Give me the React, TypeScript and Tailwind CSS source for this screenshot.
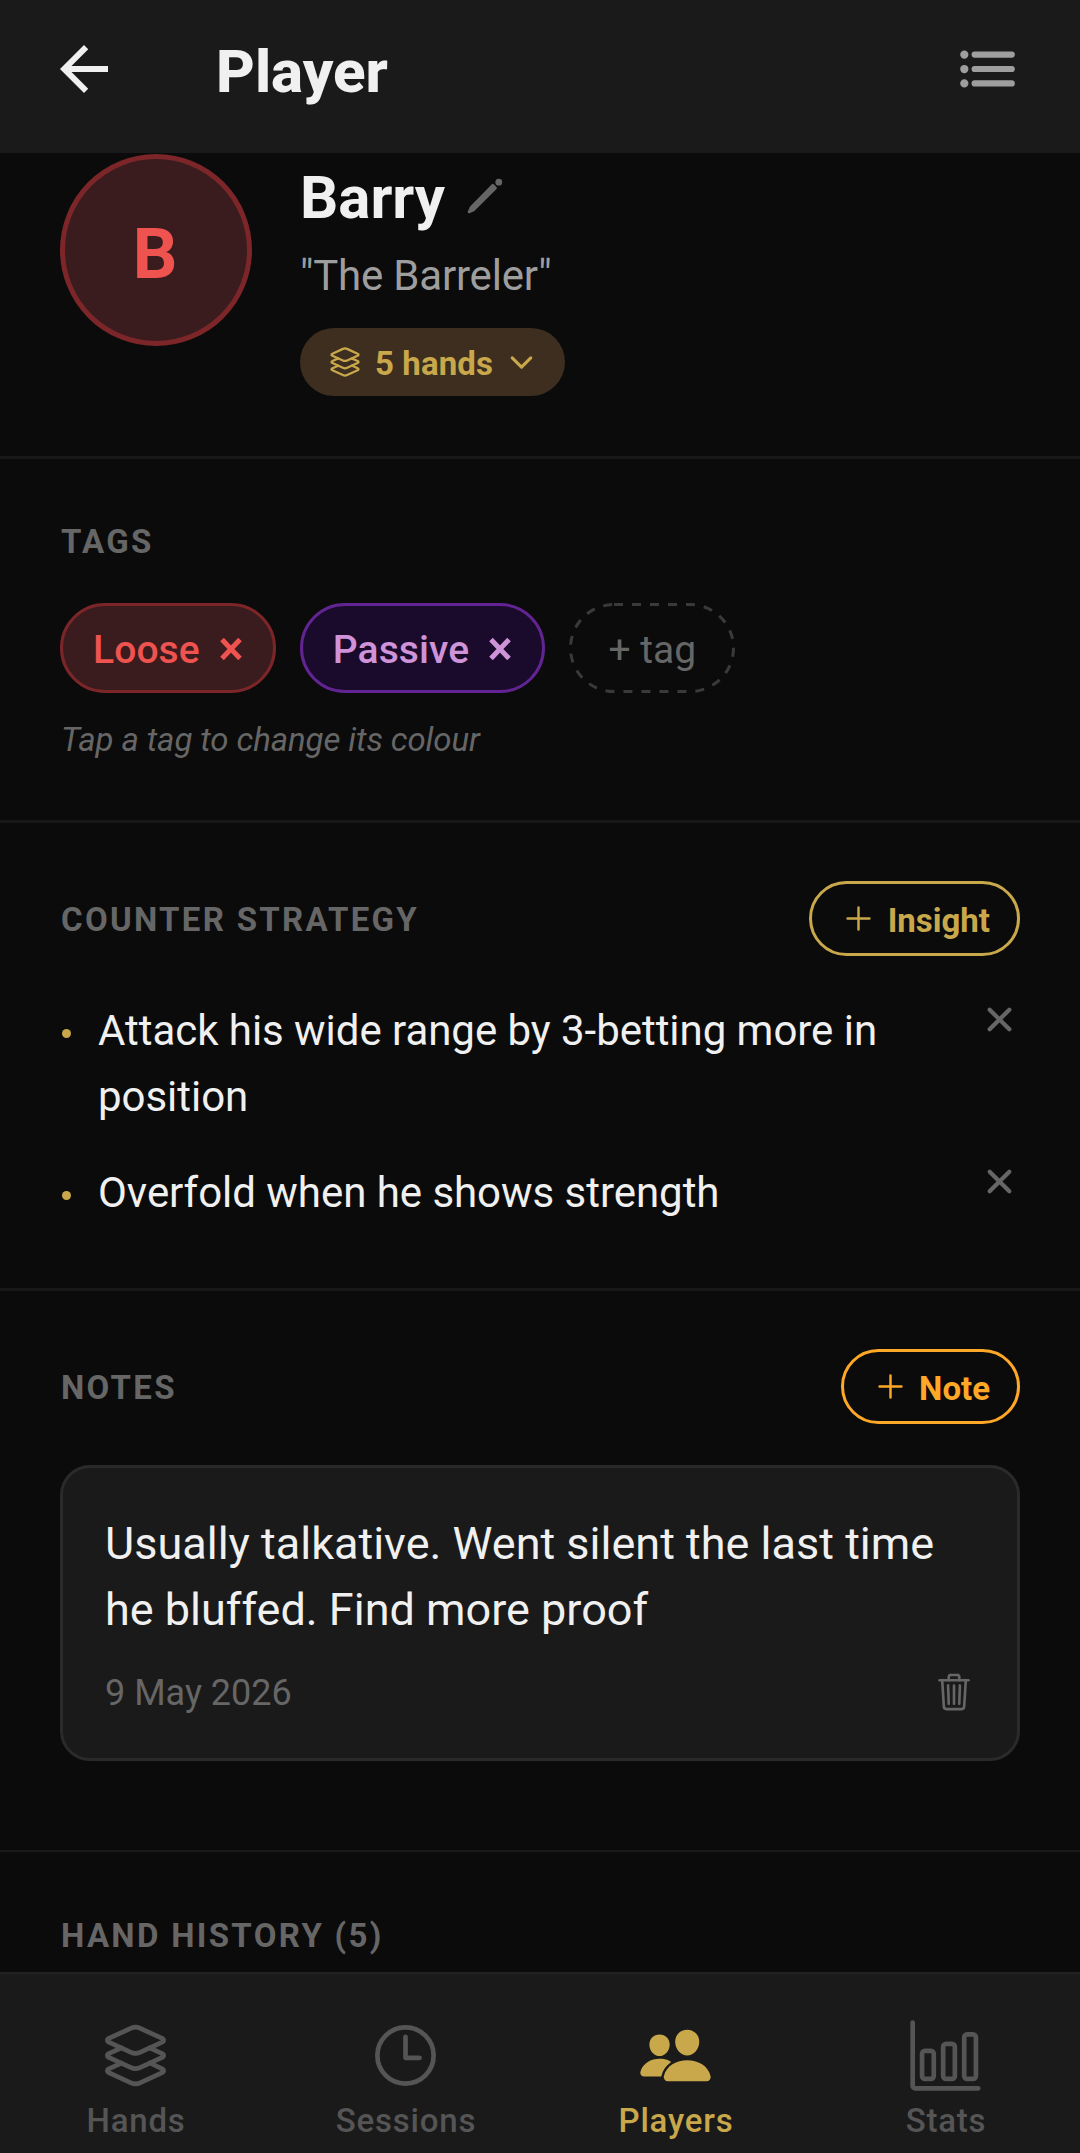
import { useState } from 'react';
import { MdArrowBack } from 'react-icons/md';
import {
  IoAddOutline,
  IoBarChartOutline,
  IoChevronDown,
  IoClose,
  IoLayersOutline,
  IoList,
  IoPeople,
  IoTimeOutline,
  IoTrashOutline,
} from 'react-icons/io5';

interface Tag { id: string; label: string; style: string; }
interface Insight { id: string; text: string; }
interface Note { id: string; text: string; date: string; }

const initialTags: Tag[] = [
  { id: 'loose', label: 'Loose', style: 'border-[#7c2629] bg-[#3a1c1e] text-[#ef5350]' },
  { id: 'passive', label: 'Passive', style: 'border-[#632493] bg-[#1a0b2c] text-[#ce93d8]' },
];

const initialInsights: Insight[] = [
  { id: '1', text: 'Attack his wide range by 3-betting more in position' },
  { id: '2', text: 'Overfold when he shows strength' },
];

const initialNotes: Note[] = [
  { id: '1', text: 'Usually talkative. Went silent the last time he bluffed. Find more proof', date: '9 May 2026' },
];

const tabs = [
  { label: 'Hands', icon: IoLayersOutline },
  { label: 'Sessions', icon: IoTimeOutline },
  { label: 'Players', icon: IoPeople },
  { label: 'Stats', icon: IoBarChartOutline },
];

function SectionLabel({ children }: { children: React.ReactNode }) {
  return <h2 className="pt-px pl-px text-[33px] leading-[40px] font-bold tracking-[2.3px] text-[#666666]">{children}</h2>;
}

function TagCross() {
  return (
    <svg viewBox="0 0 22 22" className="mt-px size-[22px]" fill="none" stroke="currentColor" strokeWidth="5">
      <path d="M2 1.5l18 19M20 1.5L2 20.5" />
    </svg>
  );
}

function PencilIcon() {
  return (
    <svg viewBox="0 0 42 42" className="mb-1 size-[42px] text-[#666666]" fill="currentColor" stroke="currentColor" strokeLinejoin="round">
      <path d="M28.8 10.2l2.8 2.8L9.5 35 5 37l2-4.5z" strokeWidth="2.6" />
      <circle cx="34.8" cy="7.2" r="3.4" stroke="none" />
    </svg>
  );
}

export default function App() {
  const [tags, setTags] = useState(initialTags);
  const [insights, setInsights] = useState(initialInsights);
  const [notes, setNotes] = useState(initialNotes);
  const [activeTab, setActiveTab] = useState('Players');

  return (
    <main className="flex h-[2153px] w-[1080px] flex-col overflow-hidden bg-[#0b0b0b] font-['Roboto',sans-serif] text-[#f0f0f0]">
      <header className="flex h-[153px] shrink-0 items-center bg-[#1a1a1a] pr-[60px] pb-[15px] pl-12">
        <button><MdArrowBack className="size-[72px]" /></button>
        <h1 className="mt-[5px] ml-24 flex-1 text-[60px] leading-[70px] font-extrabold">Player</h1>
        <button className="text-[#9e9e9e]"><IoList className="size-[66px]" /></button>
      </header>

      <div className="min-h-0 flex-1 overflow-hidden">
        <section className="flex h-[306px] gap-12 border-b-[3px] border-[#181818] px-[60px] pt-px">
          <div className="flex size-[192px] items-center justify-center rounded-full border-[5px] border-[#7c2629] bg-[#3a1c1e] text-[70px] leading-[84px] font-bold text-[#ef5350]">
            <span className="mt-[7px] mr-[2px]">B</span>
          </div>
          <div className="flex flex-col items-start pt-[9px]">
            <div className="flex items-center gap-[19px]">
              <span className="text-[60px] leading-[70px] font-bold">Barry</span>
              <PencilIcon />
            </div>
            <p className="mt-[18px] text-[42px] leading-[50px] tracking-[-0.2px] text-[#9e9e9e]">"The Barreler"</p>
            <button className="mt-[27px] flex h-[68px] items-center rounded-full bg-[#3d2e1f] px-[27px] text-[33px] font-bold text-[#c9a84c]">
              <IoLayersOutline className="size-9" />
              <span className="mt-[4px] ml-3 tracking-[0.1px]">5 hands</span>
              <IoChevronDown className="ml-3 size-[33px]" />
            </button>
          </div>
        </section>

        <section className="border-b-[3px] border-[#181818] px-[60px] pt-[62px] pb-[60px]">
          <SectionLabel>TAGS</SectionLabel>
          <div className="mt-[41px] flex gap-6">
            {tags.map((tag) => (
              <button
                key={tag.id}
                onClick={() => setTags(tags.filter((t) => t.id !== tag.id))}
                className={`flex h-[90px] items-center gap-5 rounded-full border-[3px] pr-[31px] pl-[30px] text-[39px] font-medium tracking-[0.1px] ${tag.style}`}
              >
                <span className="mt-[5px]">{tag.label}</span>
                <TagCross />
              </button>
            ))}
            <button className="relative flex h-[90px] w-[166px] items-center justify-center text-[39px] text-[#666666]">
              <svg viewBox="0 0 166 90" className="absolute inset-0 size-full" fill="none">
                <rect x="1.5" y="1.5" width="163" height="87" rx="43.5" stroke="#3a3a3a" strokeWidth="3" strokeDasharray="9 9" />
              </svg>
              <span className="mt-[5px]">+ tag</span>
            </button>
          </div>
          <p className="mt-[27px] pl-px text-[33px] leading-[40px] tracking-[-0.1px] text-[#666666] italic">Tap a tag to change its colour</p>
        </section>

        <section className="border-b-[3px] border-[#181818] px-[60px] pt-[58px] pb-[62px]">
          <div className="flex items-center justify-between">
            <div className="pt-[2px]"><SectionLabel>COUNTER STRATEGY</SectionLabel></div>
            <button className="flex h-[75px] items-center rounded-full border-[3px] border-[#c9a84c] px-[27px] text-[33px] font-bold text-[#c9a84c]">
              <IoAddOutline className="size-[39px]" />
              <span className="mt-[4px] ml-[10px]">Insight</span>
            </button>
          </div>
          <ul className="mt-[42px] space-y-[30px]">
            {insights.map((insight) => (
              <li key={insight.id} className="flex items-start">
                <span className="mt-[31px] ml-[2px] size-[9px] rounded-full bg-[#c9a84c]" />
                <p className="ml-[27px] w-[860px] text-[42px] leading-[66px] tracking-[-0.04px]">{insight.text}</p>
                <button
                  onClick={() => setInsights(insights.filter((i) => i.id !== insight.id))}
                  className="-mt-px -mr-[2px] ml-auto text-[#666666]"
                >
                  <IoClose className="size-[45px]" />
                </button>
              </li>
            ))}
          </ul>
        </section>

        <section className="border-b-2 border-[#1a1a1a] px-[60px] pt-[58px] pb-[89px]">
          <div className="flex items-center justify-between">
            <div className="pt-[2px]"><SectionLabel>NOTES</SectionLabel></div>
            <button className="flex h-[75px] items-center rounded-full border-[3px] border-[#ffa726] px-[27px] text-[33px] font-bold text-[#ffa726]">
              <IoAddOutline className="size-[39px]" />
              <span className="mt-[4px] ml-[9px]">Note</span>
            </button>
          </div>
          {notes.map((note) => (
            <div key={note.id} className="mt-[41px] rounded-[30px] border-[3px] border-[#2a2a2a] bg-[#1a1a1a] px-[42px] pt-[43px] pb-[44px]">
              <p className="text-[45px] leading-[66px]">{note.text}</p>
              <div className="mt-[29px] flex h-[42px] items-center justify-between text-[36px] text-[#666666]">
                <span>{note.date}</span>
                <button className="mb-[2px]" onClick={() => setNotes(notes.filter((n) => n.id !== note.id))}>
                  <IoTrashOutline className="size-[42px]" />
                </button>
              </div>
            </div>
          ))}
        </section>

        <section className="px-[60px] pt-[63px]">
          <SectionLabel>HAND HISTORY (5)</SectionLabel>
        </section>
      </div>

      <nav className="grid h-[181px] shrink-0 grid-cols-4 border-t-2 border-[#222222] bg-[#1a1a1a]">
        {tabs.map(({ label, icon: Icon }) => (
          <button
            key={label}
            onClick={() => setActiveTab(label)}
            className={`flex flex-col items-center pt-11 ${label === activeTab ? 'text-[#c9a84c]' : 'text-[#555555]'}`}
          >
            <Icon className="size-[75px]" />
            <span className="mt-2 pl-[2px] text-[33px] leading-[40px] font-medium tracking-[0.8px]">{label}</span>
          </button>
        ))}
      </nav>
    </main>
  );
}
